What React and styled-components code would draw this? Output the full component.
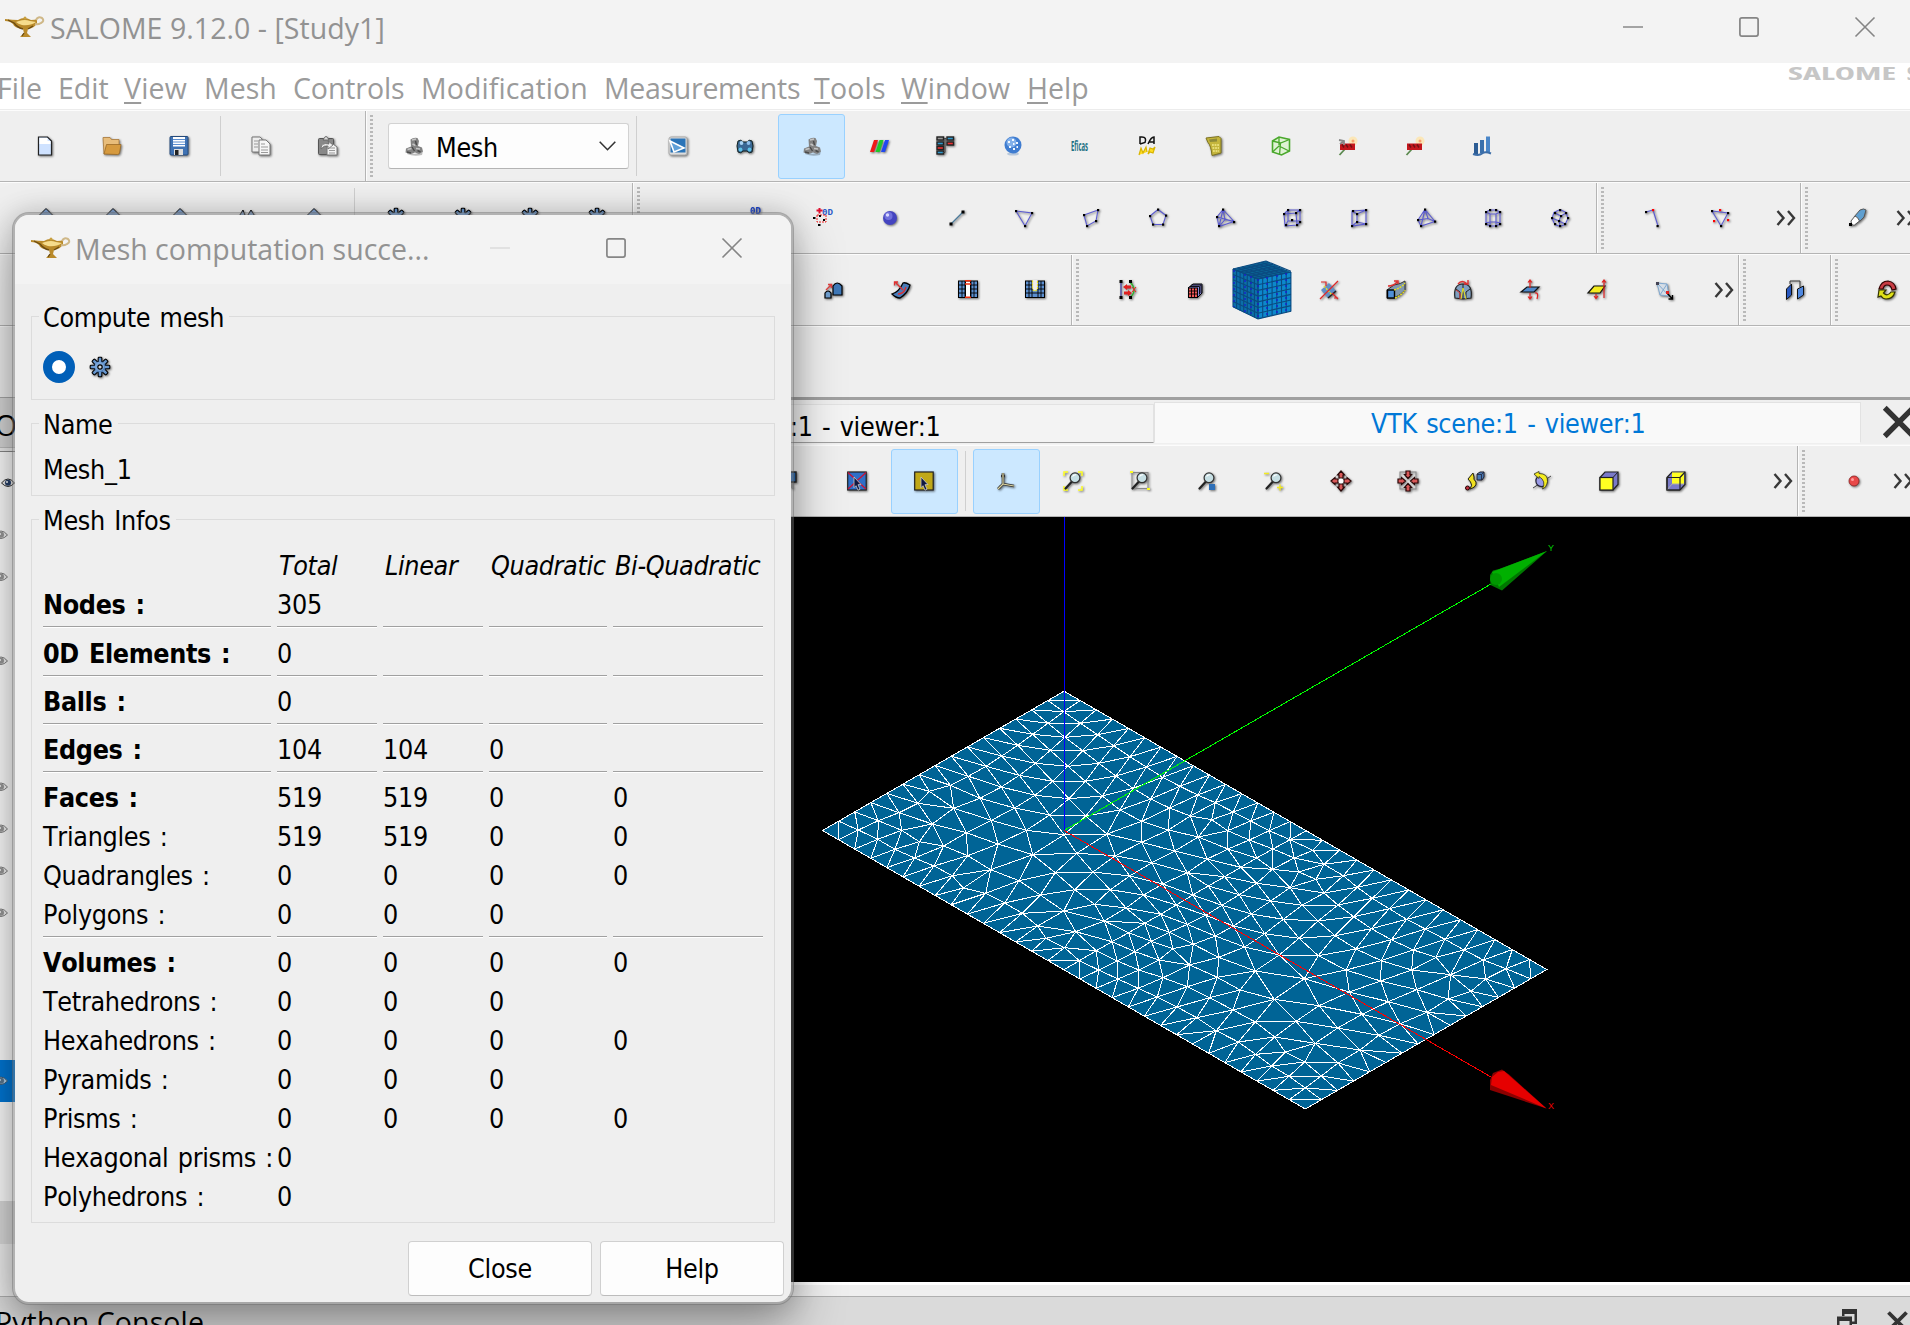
import React from "react";
import styled, { createGlobalStyle, css } from "styled-components";

const UI = `"DejaVu Sans Condensed", "DejaVu Sans", sans-serif`;
const TITLE = `"Open Sans", "Noto Sans", sans-serif`;

const GlobalStyle = createGlobalStyle`
  * { box-sizing: border-box; }
  html, body { margin: 0; padding: 0; overflow: hidden; background: #efefef; }
`;

/* ---------- mesh data: node coordinates in thirds of a scene pixel ---------- */

const WEST = `764,95 717,130 814,130 671,163 768,172 866,164 626,196 724,211 821,212 914,197 578,228 679,250 777,259 870,250 963,230
531,259 631,286 731,304 829,304 921,288 1012,261 478,289 577,321 678,346 780,356 880,348 972,325 1061,292
424,316 513,355 617,384 722,405 830,408 933,390 1025,357 1113,319 1166,345 361,334 434,385 547,421 652,451 765,464 894,462
998,424 1082,384 1144,408 327,370 370,432 472,458 567,492 671,524 803,520 919,527 998,487 1078,450 1168,471
270,398 278,451 208,422 148,450 206,478 258,508 331,485 404,498 476,527 545,569 630,602 739,578 852,576 962,588 1029,548 1097,513 1195,537
317,534 375,558 430,587 463,624 530,640 587,669 694,645 797,629 904,629 1004,645 1061,612 1135,578
640,700 764,693 857,673 951,684 1102,675 1151,645 1055,703 686,738 800,755 886,723 1007,730 1135,733 1190,706
711,775 767,803 862,812 909,785 959,758 1027,784 1081,757 1153,793 811,842 869,870 925,843 978,815 1050,840 1091,806 1142,855
927,897 990,870 1062,893 1135,920 988,925 1045,951 1104,981 1163,1013`;

const EAST = `79,68 133,96 68,119 185,123 116,152 241,152 181,180 303,179 117,207 252,207 203,234 372,211 316,234 405,253
155,262 250,268 329,276 463,287 107,290 381,298 203,310 303,323 505,322 58,318 405,339 151,344 550,355 245,363 339,376
447,375 601,386 99,376 653,418 187,402 283,418 387,423 494,410 709,447 547,446 134,438 227,461 330,475 438,467 607,479
768,478 79,468 167,501 271,525 388,527 501,507 673,510 741,532 825,510 577,542 883,540 951,566 89,532 199,573 346,596
471,570 575,603 668,570 785,584 890,597 85,592 153,630 256,658 390,677 481,636 598,665 683,629 777,657 846,634 62,653
132,690 199,726 321,724 446,744 519,703 634,731 714,697 82,752 148,786 257,771 379,790 513,810 569,766 200,823 289,816
347,846 447,849 248,858 300,889 397,888 349,924`;

const parse = (s, ox, oy) =>
  s.trim().split(/\s+/).map((p) => {
    const [x, y] = p.split(",").map(Number);
    return [(x + ox) / 3, (y + oy) / 3];
  });

const side = (a, b, n) =>
  Array.from({ length: n }, (_, i) => [a[0] + ((b[0] - a[0]) * i) / n, a[1] + ((b[1] - a[1]) * i) / n]);

const CORNERS = [[13.5, 150.5], [255, 11.2], [737.8, 289.5], [496.3, 429]];

function buildMesh() {
  const [l, t, r, b] = CORNERS;
  const upper = Array.from({ length: 29 }, (_, i) => {
    const x = i <= 16 ? 255 + 16.15 * i : 513.4 + ((737.8 - 513.4) * (i - 16)) / 13;
    return [x, 11.2 + ((x - 255) / (r[0] - t[0])) * (r[1] - t[1])];
  });
  const rim = [...side(l, t, 15), ...upper, ...side(r, b, 15), ...side(b, l, 30)];
  const pts = [...rim, ...parse(WEST, 0, 0), ...parse(EAST, 1140, 300)];
  // Delaunay in plane space: undo the isometric squash on y
  const P = pts.map(([x, y]) => [x, y * 1.732]);
  const n = P.length;
  P.push([-9000, -9000], [9500, -9000], [300, 18000]);
  const circ = (a, b2, c) => {
    const [ax, ay] = P[a], [bx, by] = P[b2], [cx, cy] = P[c];
    const d = 2 * (ax * (by - cy) + bx * (cy - ay) + cx * (ay - by));
    const A = ax * ax + ay * ay, B = bx * bx + by * by, C = cx * cx + cy * cy;
    const x = (A * (by - cy) + B * (cy - ay) + C * (ay - by)) / d;
    const y = (A * (cx - bx) + B * (ax - cx) + C * (bx - ax)) / d;
    return { v: [a, b2, c], x, y, r: (ax - x) ** 2 + (ay - y) ** 2 };
  };
  let tris = [circ(n, n + 1, n + 2)];
  for (let i = 0; i < n; i++) {
    const edges = new Map();
    const keep = [];
    for (const q of tris) {
      if ((P[i][0] - q.x) ** 2 + (P[i][1] - q.y) ** 2 < q.r) {
        for (let k = 0; k < 3; k++) {
          const e = [q.v[k], q.v[(k + 1) % 3]].sort((m, o) => m - o);
          const key = e.join("-");
          edges.has(key) ? edges.set(key, null) : edges.set(key, e);
        }
      } else keep.push(q);
    }
    for (const e of edges.values()) if (e) keep.push(circ(e[0], e[1], i));
    tris = keep;
  }
  const lines = new Map();
  for (const { v } of tris) {
    if (v.some((k) => k >= n)) continue;
    for (let k = 0; k < 3; k++) {
      const e = [v[k], v[(k + 1) % 3]].sort((m, o) => m - o);
      lines.set(e.join("-"), e);
    }
  }
  return [...lines.values()]
    .filter(([a, b2]) => Math.hypot(P[a][0] - P[b2][0], P[a][1] - P[b2][1]) < 75)
    .map(([a, b2]) => `M${pts[a].map((k) => k.toFixed(1))}L${pts[b2].map((k) => k.toFixed(1))}`)
    .join("");
}
const MESH_PATH = buildMesh();

/* ---------- icons ---------- */

const Glyph = styled.svg`
  display: block;
  flex: none;
  overflow: visible;
  margin-top: ${(p) => p.$drop || 0}px;
  ${(p) => p.$shadow && css`filter: drop-shadow(1px 1px 1px rgba(0, 0, 0, 0.55));`}
`;

const Ico = ({ children, size = 20, shadow = true }) => (
  <Glyph width={size} height={size} viewBox="0 0 20 20" fill="none" $shadow={shadow}>{children}</Glyph>
);

const Wire = ({ d, dots, red = [] }) => (
  <Ico>
    <path d={d} stroke="#5a5ad0" strokeWidth="1.1" />
    {dots.map(([x, y], i) => <rect key={i} x={x - 1} y={y - 1} width="2.2" height="2.2" fill="#000" />)}
    {red.map(([x, y], i) => <rect key={`r${i}`} x={x - 1} y={y - 1} width="2.2" height="2.2" fill="#f00" />)}
  </Ico>
);

const gearTeeth = Array.from({ length: 8 }, (_, i) => i * 45);
const Gear = () => (
  <Ico>
    {gearTeeth.map((a) => <rect key={a} x="8.200" y="0.200" width="3.600" height="6" rx="0.800" fill="#5f8fc8" stroke="#000" strokeWidth="1.100" transform={`rotate(${a} 10 10)`} />)}
    <circle cx="10" cy="10" r="6" fill="#4a78b0" stroke="#0c1626" strokeWidth="0.900" />
    {gearTeeth.map((a) => <rect key={`f${a}`} x="8.900" y="2.500" width="2.200" height="3" fill="#6d9bd2" transform={`rotate(${a} 10 10)`} />)}
    <circle cx="9.500" cy="9.500" r="4.600" fill="#7ba6da" />
    <circle cx="10" cy="10" r="2.200" fill="#cfd6de" stroke="#000" strokeWidth="1.200" />
  </Ico>
);
const Magnifier = ({ children }) => (
  <Ico>
    {children}
    <path d="M8.500 11L2.500 17.500" stroke="#222" strokeWidth="2.200" strokeLinecap="round" />
    <circle cx="12" cy="6.800" r="4.900" fill="#c6dfe4" stroke="#333" strokeWidth="1.200" />
    <path d="M9.500 5.500q1.500-2 3.500-1.700" stroke="#fff" strokeWidth="1.200" />
  </Ico>
);
const Gridded = ({ notch }) => (
  <Ico>
    <rect x="0.500" y="1" width="19" height="16.500" fill="#5b8fd0" stroke="#000" />
    <path d="M4 1V17M7 1V17M13 1V17M16 1V17M0 5H20M0 9H20M0 13H20" stroke="#000" strokeWidth="0.900" />
    {notch
      ? <g><rect x="7.500" y="0" width="5" height="8" fill="#efefef" /><path d="M7.500 0.500V9q2.500 4 5 0V0.500" fill="#efefef" stroke="#e8dc20" strokeWidth="1.200" strokeDasharray="2 1" /></g>
      : <g><rect x="7.500" y="1" width="5" height="16.500" fill="#fff" stroke="#000" /><path d="M7 .8h6M7 4h6M7 17.200h6" stroke="#f03010" strokeWidth="1.600" /></g>}
  </Ico>
);
const Arrows = ({ inward }) => (
  <Ico>
    {inward && <rect x="2" y="1" width="16" height="17" stroke="#888" />}
    {[0, 90, 180, 270].map((a) => (
      <path key={a} transform={`rotate(${a} 10 10)`} d={inward ? "M8 0h4v3.500h1.500L10 7.500 6.500 3.500H8z" : "M10 0l3.500 4H12v3H8V4H6.500z"} fill="#d85858" stroke="#2a0808" strokeWidth="1.200" />
    ))}
    {!inward && <circle cx="10" cy="10" r="2.500" fill="#fff" />}
  </Ico>
);
const Selector = ({ fill, cross }) => (
  <Ico>
    <rect x="0.700" y="1" width="18.500" height="18" fill={fill} stroke="#222" strokeWidth="1.200" />
    {cross && <path d="M1 1.500L19 18M19 1.500L1 18" stroke="#d01030" strokeWidth="1.200" />}
    <path d="M7 6l7 7.500-3 .2 2 4.500-2 1-2-4.500-2 2z" fill="#101840" stroke="#ccc" strokeWidth="0.800" />
  </Ico>
);
const Cube = ({ inner }) => (
  <Ico>
    <path d="M1 6.500L6 1h13v12.500L14 19H1z" fill="#7a7ac8" stroke="#222" strokeWidth="1.200" />
    {inner
      ? <g><rect x="6" y="1.500" width="12" height="11.500" fill="#ff2" /><path d="M1 19l5-6h12" stroke="#aaa" /><path d="M1 6.500h13V19M14 6.500l5-5.500M1 6.500V19H14" stroke="#222" strokeWidth="1.200" /></g>
      : <g><rect x="1" y="6.500" width="13" height="12.500" fill="#ff2" stroke="#222" strokeWidth="1.200" /><path d="M14 6.500l5-5.500" stroke="#222" /></g>}
  </Ico>
);
const Hammer = ({ second }) => (
  <Ico shadow={false}>
    <circle cx="15" cy="5" r="4.500" fill="#fbe7b8" /><circle cx="15" cy="5" r="1.500" fill="#f8a070" />
    <path d="M1.500 19L7 13" stroke="#5c8a50" strokeWidth="1.800" />
    <rect x="2" y="7.500" width="15" height="6.500" fill="#c4161c" /><path d="M4 8.500l2 3M8 8.500l2 3M12 8.500l2 3" stroke="#701015" strokeWidth="1.500" />
    {second && <path d="M1 4l5 1v4M2 8l4-3" stroke="#888" strokeWidth="1.800" />}
  </Ico>
);
const MeshLump = () => (
  <Ico shadow={false}>
    <path d="M3 14q6 7 16 1l-1 4q-8 2-15-1z" fill="#000" opacity="0.250" />
    <path d="M6.500 3.500q3-2.500 7-1.500l1.500 3-1 5 4 1.500 1 4-4 2.500-4-1.500-4 1.500-5.500-1.500.5-4 5-2z" fill="#828282" />
    <path d="M8 4l4-1M8.500 8l3 1.500M3.500 13.500l4-1M12 12.500l4 .5" stroke="#c4c4c4" strokeWidth="1.500" />
    <path d="M11.500 5l1 4M8 11l2.500 4M13.500 14.500l3 1.500M3 16l4 1" stroke="#4a4a4a" strokeWidth="1.400" />
  </Ico>
);

const ICONS = {
  file: <Ico><path d="M3.500 1h9l4 4v14h-13z" fill="#cfe2ff" stroke="#222" strokeWidth="1.200" /><path d="M4.500 2h8v3h3v3h-11z" fill="#fff" /></Ico>,
  folder: <Ico><path d="M1 1.500h7l1.500 2H17V15L2 18z" fill="#e8bd7b" stroke="#a8783a" strokeWidth=".8" /><path d="M2 18l2.500-9.500H19L17.500 17q-.5 1.500-2 1.500z" fill="#d69a3f" stroke="#9a6a26" strokeWidth=".8" /></Ico>,
  save: <Ico><rect x="1" y="0.500" width="18" height="18.500" rx="1" fill="#3f72b3" stroke="#244a7c" /><rect x="4" y="1" width="12" height="9.500" fill="#fff" /><path d="M4 3.500h12M4 6h12M4 8.500h12" stroke="#5d8fd0" /><rect x="5" y="13" width="9" height="6" fill="#ddd" /><rect x="6" y="14" width="3.500" height="5" fill="#222" /></Ico>,
  copy: <Ico><path d="M1 1h8l2 2v13H1z" fill="#eee" stroke="#777" /><path d="M8 4h7l4 4v11H8z" fill="#f6f6f6" stroke="#777" /><path d="M3 5h4M3 8h4M3 11h4M10 8h4M10 11h7M10 14h7M10 16.500h7" stroke="#999" /></Ico>,
  paste: <Ico><rect x="0.500" y="2.500" width="15" height="16" rx="1" fill="#888" stroke="#555" /><path d="M5 4q3-7 6 0z" fill="#ddd" stroke="#666" /><path d="M9 8h6l4 3v8H9z" fill="#f2f2f2" stroke="#777" /><path d="M11 12h6M11 14.500h6M11 17h6" stroke="#999" /><path d="M3 13q0-7 8-5l-1-3 5 4-5 4v-3q-4-1-7 3z" fill="#eee" stroke="#666" strokeWidth=".8" /></Ico>,
  lump: <MeshLump />,
  shaper: <Ico><rect x="1" y="1" width="18" height="18" rx="2" fill="#ddd" stroke="#aaa" /><rect x="2.500" y="2.500" width="15" height="14" fill="#2a74b8" /><path d="M2 5l14 7-10 4z" stroke="#fff" strokeWidth="1.600" fill="#5fa0d8" /></Ico>,
  geom: <Ico><path d="M3 5q3-2 5 1h4q2-3 5-1l1 5-1 6q-3 2-5-1H8q-2 3-5 1l-1-6z" fill="#3a6894" stroke="#122" /><circle cx="6.500" cy="7" r="1.900" fill="#a8d4f4" /><circle cx="13.500" cy="7" r="1.900" fill="#8fc0ec" /><circle cx="5.500" cy="13.500" r="1.900" fill="#5fc3e8" /><circle cx="14.500" cy="13.500" r="1.900" fill="#5fc3e8" /></Ico>,
  para: <Ico><path d="M5 4h4L5 16H1z" fill="#f01818" /><path d="M10.500 4h4l-4 12h-4z" fill="#20c828" /><path d="M16 4h4l-4 12h-4z" fill="#2048f0" /></Ico>,
  yacs: <Ico>{[[1, 1, "#999"], [11, 1, "#39c"], [1, 6, "#39c"], [11, 6, "#e33"], [1, 10.500, "#e33"], [1, 15, "#39c"]].map(([x, y, c], i) => <rect key={i} x={x} y={y} width="6.500" height="3" fill={c} stroke="#222" strokeWidth="1.400" />)}<path d="M8 2.500h3M9 2.500v14h-2" stroke="#444" /></Ico>,
  globe: <Ico shadow={false}><ellipse cx="10" cy="18" rx="6" ry="1.600" fill="#b8c8dc" /><circle cx="10" cy="9" r="8.500" fill="#3f7cd0" /><circle cx="8.500" cy="6.500" r="5" fill="#82b0ea" /><path d="M5 6h2M9 4h2M13 7h2M6 11h2M10 13h2M13.500 11h1.500M10 8h1.500" stroke="#f2f8ff" strokeWidth="1.800" /></Ico>,
  eficas: <Ico shadow={false}><text x="1" y="15" fontSize="14" fontWeight="700" textLength="17" lengthAdjust="spacingAndGlyphs" fill="#1d7184" fontFamily="Open Sans, sans-serif">Eficas</text></Ico>,
  adao: <Ico shadow={false}><path d="M3 8V1h2q5 0 3 5.500L3 8M11 8q3-7 6-7v7M12 6h5" stroke="#111" strokeWidth="1.500" /><path d="M2 19l2-7 2 5 3-6 1 5M11 18l2-6 3 1 2-2-2 6-3-1z" stroke="#d8b400" fill="#fd2" strokeWidth="1.200" /></Ico>,
  calc: <Ico><path d="M2 2l13-1.500 2 2V17l-9 2.500q-1-10-4-13z" fill="#c4b53c" stroke="#7d7320" /><path d="M5 3.500l8-1v3l-7 .5z" fill="#8d8a3a" /><path d="M8 9h7M8.500 12H15M9 15h6" stroke="#f2e98a" strokeWidth="1.600" strokeDasharray="1.800 .8" /></Ico>,
  hexa: <Ico shadow={false}><path d="M1.500 5L8 1l10.500 2.500V15l-8 4-9-3z" fill="#dff2d4" stroke="#4aa82c" strokeWidth="1.600" /><path d="M1.500 5l8 2 9-3.500M9.500 7l-1 12M8 1v8M1.500 16L8 10l10 5" stroke="#4aa82c" strokeWidth="1.300" /></Ico>,
  hammer2: <Hammer second />,
  hammer: <Hammer />,
  chart: <Ico shadow={false}><path d="M2 7h4v11H2z" fill="#2c5c94" /><path d="M8 4h4v13H8z" fill="#3a70ac" /><path d="M14 0.500h4v16h-4z" fill="#4a86c8" /><path d="M1 18q6 2 9-.5t9 0" stroke="#3d6ea8" strokeWidth="2" /></Ico>,
  arrow: <Ico><path d="M10 0.500l9 9h-5v9H6v-9H1z" fill="#7f9fcb" stroke="#111" /></Ico>,
  arrows: <Ico><path d="M6 2l-5 8h4v8h4V10zM14 2l-5 8h3v8h4v-8h3z" fill="#7f9fcb" stroke="#111" /></Ico>,
  gear: <Gear />,
  zero: <Ico><text x="4" y="6" fontSize="10" fontWeight="700" fill="#1840c8" fontFamily="Liberation Mono, monospace" textLength="11" lengthAdjust="spacingAndGlyphs">0D</text></Ico>,
  zeroAll: <Ico shadow={false}><text x="9" y="6.500" fontSize="9.500" fontWeight="700" fill="#2858c8" fontFamily="Liberation Mono, monospace" textLength="11" lengthAdjust="spacingAndGlyphs">0D</text><path d="M3.500 2.500h6M6.500 0v5.500" stroke="#e01030" strokeWidth="2" /><rect x="4" y="7" width="9" height="7" stroke="#f02020" strokeDasharray="2 1" /><path d="M0 10h2.500M5 17h2.500M10 12h2M6 8h2" stroke="#000" strokeWidth="2.200" /></Ico>,
  ball: <Ico><circle cx="10" cy="10" r="7" fill="#4444c0" /><circle cx="8.500" cy="8" r="4" fill="#7070dc" /><circle cx="7.500" cy="7" r="1.700" fill="#d8d8ff" /></Ico>,
  edge: <Ico><path d="M4 16L16 4" stroke="#4a7a9a" strokeWidth="1.200" /><rect x="2.500" y="14.500" width="3" height="3" fill="#000" /><rect x="14.500" y="2.500" width="3" height="3" fill="#000" /></Ico>,
  tri: <Wire d="M2 3l16 2-7 13z" dots={[[2, 3], [18, 5], [11, 18]]} />,
  quad: <Wire d="M3 7l14-5-2 11-9 5z" dots={[[3, 7], [17, 2], [15, 13], [6, 18]]} />,
  penta: <Wire d="M10 1.500l8 6-3 9H5L2 8z" dots={[[10, 1.500], [18, 7.500], [15, 16.500], [5, 16.500], [2, 8]]} />,
  tetra: <Wire d="M8 1.500l11 12-15 5L2 9zM8 1.500L4 18.500M2 9l17 4.500M8 1.500l2 10-6 7M10 11.500l9 2" dots={[[8, 1.500], [19, 14], [4, 18], [2, 9]]} />,
  hex: <Wire d="M2 6l12-1 1 12-12 1zM6 2h12v12M2 6l4-4v11h12M14 5l4-3M15 17l3-3M3 18l3-5" dots={[[2, 6], [14, 5], [15, 17], [4, 17], [6, 2], [18, 2], [18, 14], [10, 12]]} />,
  prism: <Wire d="M3 3l14-1v14L3 18zM3 3l5 3v8l-5 4M8 6l9-4M8 14l9 2" dots={[[4, 3], [17, 2], [17, 16], [3, 18], [8, 6], [8, 14]]} />,
  pyra: <Wire d="M9 1.500l10 12-14 4.500-3-6zM9 1.500L2 12M9 1.500L5 18M9 1.500l3 9M2 12l10-1.500 7 3" dots={[[9, 1.500], [19, 13.500], [5, 18], [2, 12]]} />,
  hexPrism: <Wire d="M3 4l4-2h6l4 2v12l-4 2H7l-4-2zM3 4l4 2h6l4-2M7 6v12M13 6v12M3 15l4-1h6l4 1" dots={[[3, 4], [7, 2], [13, 2], [17, 4], [3, 16], [7, 18], [13, 18], [17, 16]]} />,
  poly: <Wire d="M10 1.500l6 3 2 6-3 6-5 2-5-2-3-6 2-6zM5 5l6 3 5-3M11 8l-2 5 6 3M9 13l-7-3M9 13l1 5" dots={[[10, 2], [16, 5], [18, 10], [15, 16], [10, 18], [5, 16], [2, 10], [5, 5], [11, 8], [9, 13]]} />,
  bend: <Wire d="M3 4l7-2 5 16" dots={[[3, 4], [14.500, 18]]} red={[[10, 2]]} />,
  quadTri: <Wire d="M2 3l16 2-7 13z" dots={[[2, 3], [18, 5], [11, 18]]} red={[[10, 2], [4, 13], [18, 12]]} />,
  eraser: <Ico><path d="M7 9l6-7q4-2 6 0l-2 7-5 5z" fill="#5f9fd0" stroke="#555" /><path d="M4 13l4-5q3 1 4.500 5l-5 4q-3 1-3.500-4z" fill="#fff" stroke="#555" /><rect x="2" y="15" width="3" height="3" fill="#000" /></Ico>,
  scale: <Ico><path d="M9 15V6q4-6 9 0v9z" fill="#3f78b8" stroke="#000" strokeWidth="1.200" /><path d="M1 18v-5q3-4 6 0v5z" fill="#6f9fd0" stroke="#000" strokeWidth="1.200" /><path d="M2 10l5-5M4 4.500h3.500V8" stroke="#e04040" strokeWidth="1.400" /></Ico>,
  surface: <Ico><path d="M1 14q7-2 11-11 2-1 7 2-2 8-10 13-4 0-8-4z" fill="#4a7cb8" stroke="#000" strokeWidth="1.300" /><path d="M4 2l8 8M3.500 5.500V2H7M7 14q6 0 8-7" stroke="#e03030" strokeWidth="1.300" /></Ico>,
  split: <Gridded />,
  notch: <Gridded notch />,
  move: <Ico><path d="M3 2v16" stroke="#4848a0" strokeWidth="1.400" /><path d="M12 2q8 8 0 16" stroke="#30b030" strokeWidth="1.400" /><path d="M5 7l4-3v1.500h4v3H9V10zM14 13l-4-3v1.500H6v3h4V16z" fill="#e02020" /><path d="M14 7l4 5m0-5l-4 5" stroke="#f02020" /><path d="M1.500 0h3v3h-3zM1.500 16h3v3h-3zM11 0h3v3h-3zM11 16h3v3h-3z" fill="#000" /></Ico>,
  redCube: <Ico><path d="M3 8l5-4h9v9l-4 4z" fill="#8888d8" stroke="#000" /><rect x="3.500" y="8" width="9" height="9.500" fill="#ef5858" stroke="#000" /><path d="M6.500 8v9.500M9.500 8v9.500M3.500 11h9M3.500 14h9M5 6.500h9.500v8M6.500 5h9.500v8" stroke="#000" strokeWidth=".9" /></Ico>,
  diag: <Ico><path d="M2 10l8-7 7 8-8 7z" fill="#5f8fc8" /><path d="M9 18l8-7" stroke="#222" strokeWidth="1.500" /><path d="M5 6l8 9" stroke="#e8dc30" strokeDasharray="2 1" strokeWidth="1.500" /><path d="M1 19L19 1M2 2h5v4M19 18h-4M13 13l6 6" stroke="#e02828" strokeWidth="1.200" /></Ico>,
  extrude: <Ico><path d="M1 10l7-5q7-1 11-4v9q-4 5-11 8H1z" fill="#8098b0" stroke="#333" /><rect x="1.500" y="10" width="7" height="8" fill="#4f8fd8" stroke="#000" strokeWidth="1.400" /><path d="M8 10q7-2 11-7M9 18q7-3 10-8" stroke="#e8e020" strokeWidth="1.400" strokeDasharray="2 1" /><path d="M2 6q6 0 9-4M8 1h4v3" stroke="#e03030" strokeWidth="1.400" /></Ico>,
  revolve: <Ico><path d="M2 18q-2-14 8-14t8 14l-8 1z" fill="#7f9fc0" stroke="#222" strokeWidth="1.200" /><path d="M10 4v15M3 9l4 3v7M17 9l-4 3v7" stroke="#222" /><path d="M3 10l4 3v6" stroke="#e03030" /><path d="M10 8l3 11M10 8l-2 11" stroke="#e8e020" /><path d="M5 4q4-5 9 0M11 4h4V0" stroke="#e03030" strokeWidth="1.400" /></Ico>,
  plane: <Ico><path d="M1 12l6-5h12l-5 5z" fill="#4f88c8" stroke="#111" strokeWidth="1.200" /><path d="M10 0v8M8 2.500L10 0l2 2.500M10 13v6M8 16.500l2 2.500 2-2.500M15 13q4-1 2 6" stroke="#e02020" strokeWidth="1.200" /></Ico>,
  planeY: <Ico><path d="M1 13l6-7h11l-5 7z" fill="#f4ec20" stroke="#111" strokeWidth="1.200" /><path d="M17 0v18M15 2.500L17 0l2 2.500M9 14v4M7 16l2 2.500 2-2.500" stroke="#e02020" strokeWidth="1.200" /></Ico>,
  tetDrag: <Ico><path d="M3 3l10 1 2 12-9-1zM3 3l12 13M13 4L6 15" stroke="#7fa8d0" fill="#d5dde6" /><path d="M2 2h3v3H2z" fill="#445" /><path d="M13 13l5 5.500M18.500 15v4h-4" stroke="#000" strokeWidth="1.400" /><rect x="12" y="11" width="3" height="3" fill="#e02020" /></Ico>,
  mirror: <Ico><path d="M1.500 9l5-5v11l-5 4.500z" fill="#2858c0" stroke="#111" /><path d="M18.500 6l-6 3v10l6-4z" fill="#4f88e0" stroke="#111" /><path d="M5 4V1h10v6" stroke="#333" /></Ico>,
  refresh: <Ico><path d="M2 9q2-8 9-8 7 1 8 8l-4 1q-1-5-5-5-3 0-4 4z" fill="#c83c44" stroke="#300" strokeWidth="1.200" /><path d="M18 12q-2 7-9 7-3 0-5-3l-3 1 1-7h7l-2.500 3q4 4 7.500-1z" fill="#dfe018" stroke="#330" strokeWidth="1.200" /></Ico>,
  selOff: <Selector fill="#2f6fc8" cross />,
  selBlue: <Ico><rect x="0" y="1" width="16" height="10" fill="#3070b8" stroke="#222" strokeWidth="1.400" /><path d="M9 12l4 6M12 12v5" stroke="#888" strokeWidth="1.500" /></Ico>,
  selOn: <Selector fill="#c0a818" />,
  trihedron: <Ico><path d="M7 2v11l11 2M7 13l-5 5M5 5h4M3 15l2 2" stroke="#333" strokeWidth="2.600" /><path d="M7 2v11l11 2M7 13l-5 5" stroke="#d9d2a0" strokeWidth="1.200" /></Ico>,
  fitAll: <Magnifier><path d="M1 5V1h4M15 1h4v4M1 15v4h4M19 15v4h-4" stroke="#ff2" strokeWidth="1.500" /></Magnifier>,
  fitArea: <Magnifier><rect x="2" y="1.500" width="16" height="16" stroke="#888" /><path d="M0 1h3M17 18h3" stroke="#ff2" strokeWidth="2" /></Magnifier>,
  fitSel: <Magnifier><rect x="12" y="13" width="6" height="6" fill="#2f70b8" /></Magnifier>,
  zoomIn: <Magnifier><path d="M0 2.500h5M13 16.500h6M16 13.500v6" stroke="#f4ec20" strokeWidth="1.400" /></Magnifier>,
  pan: <Arrows />,
  globalPan: <Arrows inward />,
  rotPoint: <Ico><path d="M12 3l3-2h4v5l-2 3h-5z" fill="#4878b4" stroke="#223" /><path d="M12 3.500h4.500V9M16.500 3.500L19 1" stroke="#223" strokeWidth=".8" /><path d="M3 8l5-6 1 4q-1 2 2 5 1 5-6 7 3-4 .5-7z" fill="#f0e020" stroke="#221" /><circle cx="2.500" cy="17" r="2" fill="#c03040" stroke="#200" /></Ico>,
  rotate: <Ico><path d="M1 17L19 5" stroke="#444" /><circle cx="9.500" cy="10" r="5.600" fill="#9a9ae6" stroke="#223" strokeWidth="1.200" /><path d="M2 3l5-2.500v2q9 0 8.500 8-1 6-5 7.500 4-8-3.500-12.500v2z" fill="#f4ec20" stroke="#332" strokeWidth=".8" /></Ico>,
  front: <Cube />,
  back: <Cube inner />,
  record: <Ico><circle cx="10" cy="10" r="5" fill="#e84848" stroke="#8a2020" strokeWidth=".8" /><circle cx="8.500" cy="8.500" r="1.500" fill="#ff9a9a" /></Ico>,
  blank: null,
};

const cubeRows = [0, 1, 2, 3, 4, 5, 6, 7];
const MeshCube = () => (
  <Glyph width="58" height="58" viewBox="0 0 58 58">
    <path d="M0 8L33 0l25 11v39l-33 8L0 46z" fill="#0b6494" />
    <path d="M25 18l33-7v39l-33 8z" fill="#0c88cc" />
    <path d="M0 8l25 10v40L0 46z" fill="#0b6fa8" />
    <g stroke="#0b4a80" strokeWidth="1.100">
      {cubeRows.map((i) => (
        <g key={i}>
          <path d={`M0 ${8 + i * 5.400}L25 ${18 + i * 5.700}L58 ${11 + i * 5.600}`} fill="none" />
          <path d={`M${i * 3.570} ${8 + i * 1.430}v${38 + i * 0.280}`} />
          <path d={`M${25 + i * 4.700} ${18 - i}v39.500`} />
          <path d={`M${i * 3.570} ${8 + i * 1.430}L${33 + i * 3.570} ${i * 1.570}`} />
          <path d={`M${i * 4.700} ${8 - i * 1.140}l25 10.200`} />
        </g>
      ))}
    </g>
    <g stroke="#1a1ad0" strokeWidth="1.300" strokeDasharray="2 4">
      <path d="M25 18v40M1 9v37M34 16v39M44 14v38M53 12v38M12 13v39M18 15v40" />
    </g>
  </Glyph>
);

const Lamp = () => (
  <Glyph width="40" height="22" viewBox="0 0 40 22">
    <path d="M0 3q8 1 13 1 6-4 13 0 4 0 6-1v4q-2 5-9 6l-1 4 4 4H15l4-4-1-4Q9 12 8 8 5 5 0 5z" fill="#b98a2a" />
    <path d="M14 5q6-2 11 0l6 1q-6 4-14 3-4-1-6-3z" fill="#f6dc8c" />
    <path d="M3 4l6 3q4 5 9 6M23 13l5-3M19 17l-2 3" stroke="#6b4b12" strokeWidth="1.300" fill="none" />
    <path d="M31 4q2-4 6-2 3 3-1 5-3 2-6 1" stroke="#cfb888" strokeWidth="2" fill="none" />
    <circle cx="20" cy="2" r="1.500" fill="#c8a040" />
  </Glyph>
);

const Chevrons = () => (
  <Glyph width="20" height="16" viewBox="0 0 20 16" fill="none">
    <path d="M1.500 1l6 7-6 7M12 1l6 7-6 7" stroke="#383838" strokeWidth="2.400" />
  </Glyph>
);
const Minus = ({ color = "#8f8f8f" }) => <Glyph width="20" height="20" viewBox="0 0 20 20"><path d="M0 10h20" stroke={color} strokeWidth="1.600" /></Glyph>;
const Square = () => <Glyph width="20" height="20" viewBox="0 0 20 20" fill="none"><rect x="0.900" y="0.900" width="18.200" height="18.200" rx="2" stroke="#858585" strokeWidth="1.700" /></Glyph>;
const Cross = ({ size = 20, weight = 1.6, color = "#858585", drop }) => (
  <Glyph width={size} height={size} viewBox="0 0 20 20" fill="none" $drop={drop}><path d="M0.500 0.500l19 19M19.500 0.500l-19 19" stroke={color} strokeWidth={weight} /></Glyph>
);
const Eye = ({ dim }) => (
  <Glyph width="14" height="10" viewBox="0 0 14 10" fill="none" opacity={dim ? 0.75 : 1}>
    <path d="M.5 5q6.500-8 13 0-6.500 7-13 0z" fill="#eee" stroke={dim ? "#555" : "#333"} />
    <circle cx="7" cy="4.800" r="3" fill={dim ? "#777" : "#27406b"} /><circle cx="6" cy="4" r="1" fill="#fff" />
  </Glyph>
);

/* ---------- main window ---------- */

const Desktop = styled.div`
  position: relative;
  width: 1910px;
  height: 1325px;
  overflow: hidden;
  display: flex;
  flex-direction: column;
  background: #efefef;
  font: 26.67px/33px ${UI};
  font-stretch: condensed;
  font-kerning: none;
  letter-spacing: -0.3px;
  word-spacing: 2px;
  color: #000;
  white-space: nowrap;
`;
const TitleBar = styled.header`
  flex: none;
  height: 63px;
  padding: 0 35px 9px 5px;
  display: flex;
  align-items: center;
  background: #f3f3f3;
`;
const TitleText = styled.span`
  margin: ${(p) => p.$drop || 0}px 0 0 ${(p) => p.$gap || 5}px;
  font: 28.5px/40px ${TITLE};
  font-kerning: normal;
  word-spacing: 0;
  letter-spacing: ${(p) => p.$track || 0}px;
  color: #929292;
`;
const WindowButtons = styled.div`
  margin-left: auto;
  display: flex;
  gap: 96px;
`;
const MenuBar = styled.nav`
  flex: none;
  height: 47px;
  display: flex;
  background: #fff;
  border-bottom: 1px solid #ececec;
  overflow: hidden;
`;
const MenuItem = styled.span`
  flex: none;
  width: ${(p) => p.$w}px;
  padding-top: 5px;
  font: 28.5px/40px ${TITLE};
  font-kerning: normal;
  word-spacing: 0;
  letter-spacing: ${(p) => p.$track}px;
  color: #9b9b9b;
  &:first-child { margin-left: -3px; }
`;
const Key = styled.u`
  text-decoration-thickness: 2px;
  text-underline-offset: 3px;
  text-decoration-skip-ink: none;
`;
const Brand = styled.svg`
  margin: 3px -20px 0 auto;
  flex: none;
  display: block;
  overflow: visible;
  word-spacing: 0;
  letter-spacing: 0;
`;
const ToolRow = styled.div`
  flex: none;
  height: ${(p) => p.$h || 72}px;
  display: flex;
  border-top: 1px solid #fcfcfc;
  border-bottom: 1px solid #b4b4b4;
  overflow: hidden;
`;
const EmptyRow = styled.div`
  flex: none;
  height: 71px;
  border-top: 1px solid #fcfcfc;
`;
const Section = styled.div`
  flex: none;
  width: ${(p) => p.$w}px;
  padding-left: ${(p) => p.$pad || 0}px;
  display: flex;
  align-items: center;
  ${(p) => p.$edge && css`border-left: 1px solid #b4b4b4; box-shadow: inset 1px 0 #fcfcfc;`}
`;
const Handle = styled.i`
  width: 3px;
  height: 62px;
  margin: 0 15px 0 4px;
  background: repeating-linear-gradient(to bottom, #b9b9b9 0 2px, #efefef 2px 4px);
`;
const ToolButton = styled.button`
  flex: none;
  width: 67px;
  height: 65px;
  padding: 0;
  display: grid;
  place-items: center;
  border: 1px solid ${(p) => (p.$on ? "#99d1ff" : "transparent")};
  border-radius: 3px;
  background: ${(p) => (p.$on ? "#cce8ff" : "transparent")};
`;
const Divider = styled.i`
  flex: none;
  width: 1px;
  height: 60px;
  margin: 0 7px;
  background: #cfcfcf;
`;
const More = styled.span`
  margin: 0 4px 0 ${(p) => (p.$tight ? "6px" : "auto")};
`;
const Combo = styled.div`
  width: 241px;
  height: 46px;
  padding: 0 12px 0 15px;
  display: flex;
  align-items: center;
  gap: 12px;
  background: #fdfdfd;
  border: 1px solid #d2d2d2;
  border-bottom-color: #b4b4b4;
  border-radius: 3px;
  > span { padding-top: 2px; }
  > svg:last-child { margin-left: auto; }
`;
const Work = styled.main`
  flex: none;
  height: 888px;
  display: flex;
`;
const Browser = styled.aside`
  flex: none;
  width: 447px;
  display: flex;
  flex-direction: column;
  border-top: 1px solid #a8a8a8;
`;
const BrowserHead = styled.div`
  height: 50px;
  padding: 7px 0 0 0;
  font: 28.5px/40px ${TITLE};
  text-indent: -5px;
  background: #d9d9d9;
  border-bottom: 1px solid #c0c0c0;
`;
const Tree = styled.div`
  height: 750px;
  margin-top: 3px;
  padding-top: 10px;
  border-top: 1px solid #8a8a8a;
  background: #fff;
`;
const TreeRow = styled.div`
  height: 42px;
  padding-left: ${(p) => (p.$dim ? 0 : 1)}px;
  display: flex;
  align-items: center;
  background: ${(p) => (p.$active ? "#0078d7" : "transparent")};
  &:first-child { margin-bottom: 10px; }
  > svg { margin-left: ${(p) => (p.$dim ? -6 : 0)}px; }
`;
const TreeFoot = styled.div`
  height: 43px;
  background: #dcdcdc;
`;
const Viewer = styled.section`
  flex: 1;
  display: flex;
  flex-direction: column;
  border-top: 3px solid #a0a0a0;
  border-bottom: 3px solid #fff;
`;
const Tabs = styled.div`
  flex: none;
  height: 45px;
  padding-top: 2px;
  display: flex;
  border-bottom: 1px solid #f4f4f4;
`;
const Tab = styled.div`
  flex: none;
  width: 707px;
  height: ${(p) => (p.$on ? 41 : 39)}px;
  margin-top: ${(p) => (p.$on ? 0 : 2)}px;
  padding-top: ${(p) => (p.$on ? 4 : 5)}px;
  padding-left: ${(p) => p.$indent}px;
  border: 1px solid #e2e2e2;
  border-bottom-color: ${(p) => (p.$on ? "#f9f9f9" : "#a0a0a0")};
  background: ${(p) => (p.$on ? "#f9f9f9" : "#f3f3f3")};
  color: ${(p) => (p.$on ? "#0078d7" : "#000")};
`;
const TabClose = styled.span`
  margin: 5px 0 0 23px;
`;
const Scene = styled.div`
  flex: 1;
  background: #000;
  padding: 0 0 0 348px;
  overflow: hidden;
  > svg { display: block; }
`;
const Gutter = styled.div`
  flex: none;
  height: 11px;
`;
const Console = styled.footer`
  flex: 1;
  padding: 5px 3px 0 0;
  display: flex;
  align-items: flex-start;
  gap: 31px;
  border-top: 1px solid #b0b0b0;
  background: #dadada;
`;
const ConsoleTitle = styled.span`
  margin: 0 auto 0 -5px;
  font: 28.5px/40px ${TITLE};
  letter-spacing: 0.1px;
  word-spacing: 0;
`;

/* ---------- dialog ---------- */

const Dialog = styled.div`
  position: absolute;
  left: 12px;
  top: 212px;
  width: 782px;
  height: 1093px;
  display: flex;
  flex-direction: column;
  border: 3px solid rgba(110, 110, 110, 0.465);
  border-radius: 17px;
  background: #efefef padding-box;
  box-shadow: 0 22px 50px rgba(0, 0, 0, 0.34), 0 0 26px rgba(0, 0, 0, 0.14);
`;
const DialogTitle = styled.div`
  flex: none;
  height: 69px;
  padding: 0 49px 3px 16px;
  display: flex;
  align-items: center;
  background: #f3f3f3;
  border-radius: 14px 14px 0 0;
`;
const Body = styled.div`
  padding: 0 16px;
  display: flex;
  flex-direction: column;
`;
const Group = styled.section`
  height: ${(p) => p.$h}px;
  margin-top: ${(p) => p.$mt}px;
  padding: 0 11px;
  border: 1px solid #dcdcdc;
`;
const Legend = styled.h2`
  width: max-content;
  height: 33px;
  margin: -17px 0 0 -4px;
  padding: 0 5px 0 4px;
  background: #efefef;
  font: inherit;
  line-height: 35px;
`;
const MethodLine = styled.div`
  margin-top: 18px;
  display: flex;
  align-items: center;
  gap: 15px;
`;
const Radio = styled.span`
  width: 32px;
  height: 32px;
  border: 9.5px solid #005fb8;
  border-radius: 50%;
  background: #fff;
`;
const MeshName = styled.div`
  margin-top: 13px;
`;
const Table = styled.div`
  margin-top: 12px;
  display: grid;
  grid-template-columns: 228px 100px 100px 118px 150px;
  column-gap: 6px;
  row-gap: 6px;
  line-height: 35px;
`;
const Cell = styled.span`
  height: 33px;
  ${(p) => p.$bold && css`font-weight: 700; letter-spacing: -0.35px;`}
  ${(p) => p.$head && css`font-style: italic; padding-left: 2px; letter-spacing: -0.35px;`}
`;
const Rule = styled.i`
  height: ${(p) => (p.$tall ? 4 : 3)}px;
  border-top: 1px solid #a0a0a0;
  box-shadow: inset 0 1px #fff;
`;
const Buttons = styled.div`
  margin: 18px 7px 0 0;
  display: flex;
  justify-content: flex-end;
  gap: 8px;
`;
const PushButton = styled.button`
  width: 184px;
  height: 55px;
  padding: 0;
  border: 1px solid #d0d0d0;
  border-bottom-color: #bcbcbc;
  border-radius: 4px;
  background: #fdfdfd;
  font: inherit;
  font-kerning: none;
  letter-spacing: inherit;
  color: #000;
`;

const ROWS = [
  { label: "Nodes :", bold: true, v: ["305"], rule: true, tall: true },
  { label: "0D Elements :", bold: true, v: ["0"], rule: true },
  { label: "Balls :", bold: true, v: ["0"], rule: true },
  { label: "Edges :", bold: true, v: ["104", "104", "0"], rule: true },
  { label: "Faces :", bold: true, v: ["519", "519", "0", "0"] },
  { label: "Triangles :", v: ["519", "519", "0", "0"] },
  { label: "Quadrangles :", v: ["0", "0", "0", "0"] },
  { label: "Polygons :", v: ["0", "0", "0"], rule: true },
  { label: "Volumes :", bold: true, v: ["0", "0", "0", "0"] },
  { label: "Tetrahedrons :", v: ["0", "0", "0"] },
  { label: "Hexahedrons :", v: ["0", "0", "0", "0"] },
  { label: "Pyramids :", v: ["0", "0", "0"] },
  { label: "Prisms :", v: ["0", "0", "0", "0"] },
  { label: "Hexagonal prisms :", v: ["0"] },
  { label: "Polyhedrons :", v: ["0"] },
];

const MENUS = [
  ["", "File", 61, 0], ["", "Edit", 66, 0], ["V", "iew", 80, 0.2], ["", "Mesh", 89, 0], ["", "Controls", 128, -0.1],
  ["", "Modification", 183, 0.1], ["", "Measurements", 210, -0.3], ["T", "ools", 87, 0.2], ["W", "indow", 126, 0.3], ["H", "elp", 80, 0],
];

const Tools = ({ names, on }) => names.map((n, i) =>
  n === "|" ? <Divider key={i} /> : (
    <ToolButton key={i} $on={on && on.includes(i)}>{n === "meshCube" ? <MeshCube /> : ICONS[n]}</ToolButton>
  ));

const SceneDrawing = () => (
  <svg width="1114" height="765" viewBox="0 0 1114 765">
    <g transform="translate(14 163)" shapeRendering="crispEdges" fill="none">
      <path d={`M${CORNERS.join("L")}Z`} fill="#006496" stroke="#fff" />
      <path d={MESH_PATH} stroke="#fff" />
      <path d="M255-170V150" stroke="#00f" />
      <path d="M255 150.500L689-100" stroke="#0f0" />
      <path d="M255 150.500L689 401" stroke="#f00" />
    </g>
    <g transform="translate(14 163)">
      <path d="M693-89.500L681.500-95 681-105 684-109.500 690-111 738-129z" fill="#007800" />
      <path d="M690-93L683-108 738-129z" fill="#00b000" />
      <circle cx="687" cy="-101" r="6" fill="#009800" />
      <path d="M681 410l0-10 3-7 9-3.500 7 5L737.500 428.500z" fill="#8c0000" />
      <path d="M682 405l1-8 6-5 6-1L737.500 428.500z" fill="#e60000" />
      <text x="739" y="-129" fontSize="9" fill="#0c0" fontFamily="Liberation Sans, sans-serif">Y</text>
      <text x="739" y="429" fontSize="9" fill="#e00" fontFamily="Liberation Sans, sans-serif">X</text>
    </g>
  </svg>
);

export default function App() {
  return (
    <Desktop>
      <GlobalStyle />
      <TitleBar>
        <Lamp />
        <TitleText $track={0.05} $drop={1}>SALOME 9.12.0 - [Study1]</TitleText>
        <WindowButtons><Minus /><Square /><Cross /></WindowButtons>
      </TitleBar>
      <MenuBar>
        {MENUS.map(([k, rest, w, track]) => (
          <MenuItem key={rest} $w={w} $track={track}>{k && <Key>{k}</Key>}{rest}</MenuItem>
        ))}
        <Brand width="142" height="16" viewBox="0 0 142 16">
          <text x="0" y="13.500" fontSize="17" fontWeight="700" fill="#c6c6c6" fontFamily="Open Sans, sans-serif" textLength="108" lengthAdjust="spacingAndGlyphs">SALOME</text>
          <text x="119" y="13.500" fontSize="17" fontWeight="700" fill="#c6c6c6" fontFamily="Open Sans, sans-serif">S</text>
        </Brand>
      </MenuBar>

      <ToolRow>
        <Section $w={365} $pad={11.5}><Tools names={["file", "folder", "save", "|", "copy", "paste"]} /></Section>
        <Section $w={1545} $edge>
          <Handle />
          <Combo>
            {ICONS.lump}
            <span>Mesh</span>
            <Glyph width="17" height="10" viewBox="0 0 17 10" fill="none"><path d="M.7.7l7.800 8 7.800-8" stroke="#333" strokeWidth="1.600" /></Glyph>
          </Combo>
          <Divider />
          <Tools on={[2]} names={["shaper", "geom", "lump", "para", "yacs", "globe", "eficas", "adao", "calc", "hexa", "hammer2", "hammer", "chart"]} />
        </Section>
      </ToolRow>

      <ToolRow>
        <Section $w={632} $pad={12}><Tools names={["arrow", "arrow", "arrow", "arrows", "arrow", "|", "gear", "gear", "gear", "gear"]} /></Section>
        <Section $w={964} $edge>
          <Handle />
          <Tools names={["blank", "zero", "zeroAll", "ball", "edge", "tri", "quad", "penta", "tetra", "hex", "prism", "pyra", "hexPrism", "poly"]} />
        </Section>
        <Section $w={204} $edge><Handle /><Tools names={["bend", "quadTri"]} /><More><Chevrons /></More></Section>
        <Section $w={130} $edge><Handle /><Tools names={["eraser"]} /><More $tight><Chevrons /></More></Section>
      </ToolRow>

      <ToolRow>
        <Section $w={1071} $pad={800}><Tools names={["scale", "surface", "split", "notch"]} /></Section>
        <Section $w={667} $edge>
          <Handle />
          <Tools names={["move", "redCube", "meshCube", "diag", "extrude", "revolve", "plane", "planeY", "tetDrag"]} />
          <More><Chevrons /></More>
        </Section>
        <Section $w={92} $edge><Handle /><Tools names={["mirror"]} /></Section>
        <Section $w={130} $edge><Handle /><Tools names={["refresh"]} /></Section>
      </ToolRow>

      <EmptyRow />

      <Work>
        <Browser>
          <BrowserHead>O</BrowserHead>
          <Tree>
            <TreeRow><Eye /></TreeRow>
            {[1, 1, 0, 1, 0, 0, 1, 1, 1, 1, 0, 0, 0].map((e, i) => <TreeRow key={i} $dim>{e ? <Eye dim /> : null}</TreeRow>)}
            <TreeRow $dim $active><Eye dim /></TreeRow>
          </Tree>
          <TreeFoot />
        </Browser>
        <Viewer>
          <Tabs>
            <Tab $indent={342}>:1 - viewer:1</Tab>
            <Tab $on $indent={216}>VTK scene:1 - viewer:1</Tab>
            <TabClose><Cross size={30} weight={3.6} color="#333" /></TabClose>
          </Tabs>
          <ToolRow>
            <Section $w={1350} $pad={309.5}>
              <Tools on={[2, 4]} names={["selBlue", "selOff", "selOn", "|", "trihedron", "fitAll", "fitArea", "fitSel", "zoomIn", "pan", "globalPan", "rotPoint", "rotate", "front", "back"]} />
              <More><Chevrons /></More>
            </Section>
            <Section $w={130} $edge><Handle /><Tools names={["record"]} /><More $tight><Chevrons /></More></Section>
          </ToolRow>
          <Scene><SceneDrawing /></Scene>
        </Viewer>
      </Work>
      <Gutter />
      <Console>
        <ConsoleTitle>Python Console</ConsoleTitle>
        <Glyph $drop={7} width="20" height="20" viewBox="0 0 20 20"><path d="M5 0h15v15h-5v-2.500h2.500V5H7.500v2H5z" fill="#333" /><path d="M0 7.500h15V20H0zM2.500 12h10v6h-10z" fillRule="evenodd" fill="#333" /></Glyph>
        <Cross size={19} weight={4} color="#333" drop={10} />
      </Console>

      <Dialog>
        <DialogTitle>
          <Lamp />
          <TitleText $track={0} $drop={2} $gap={4}>Mesh computation succe...</TitleText>
          <WindowButtons><Minus color="#dcdcdc" /><Square /><Cross /></WindowButtons>
        </DialogTitle>
        <Body>
          <Group $h={84} $mt={32}>
            <Legend>Compute mesh</Legend>
            <MethodLine><Radio />{ICONS.gear}</MethodLine>
          </Group>
          <Group $h={73} $mt={23}>
            <Legend>Name</Legend>
            <MeshName>Mesh_1</MeshName>
          </Group>
          <Group $h={704} $mt={23}>
            <Legend>Mesh Infos</Legend>
            <Table>
              <Cell />
              {["Total", "Linear", "Quadratic", "Bi-Quadratic"].map((h) => <Cell key={h} $head>{h}</Cell>)}
              {ROWS.map((r) => (
                <React.Fragment key={r.label}>
                  <Cell $bold={r.bold}>{r.label}</Cell>
                  {[0, 1, 2, 3].map((c) => <Cell key={c}>{r.v[c]}</Cell>)}
                  {r.rule && [0, 1, 2, 3, 4].map((c) => <Rule key={`r${c}`} $tall={r.tall} />)}
                </React.Fragment>
              ))}
            </Table>
          </Group>
        </Body>
        <Buttons>
          <PushButton>Close</PushButton>
          <PushButton>Help</PushButton>
        </Buttons>
      </Dialog>
    </Desktop>
  );
}
